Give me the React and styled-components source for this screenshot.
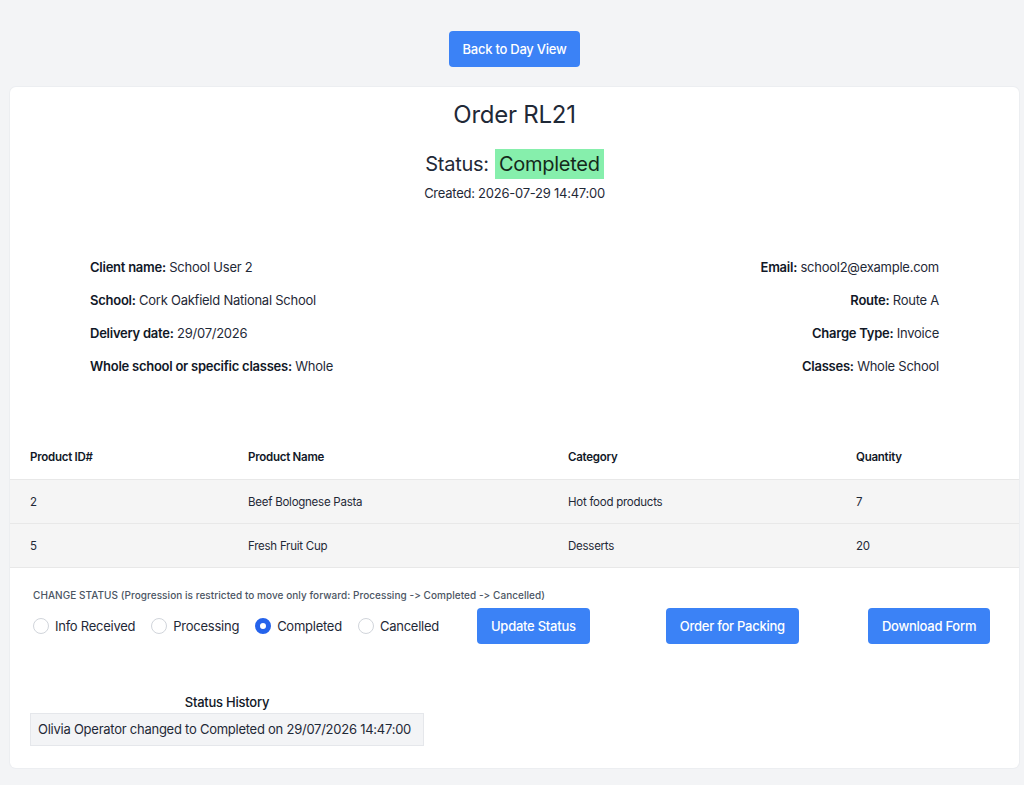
import React, { useState } from "react";
import styled, { createGlobalStyle } from "styled-components";

const GlobalStyle = createGlobalStyle`
  body {
    margin: 0;
    background: #f3f4f6;
    font-family: Inter, "Noto Sans", "Liberation Sans", sans-serif;
    font-feature-settings: "calt" 0;
    letter-spacing: -0.25px;
    color: #1f2937;
  }
`;

const Page = styled.div`
  padding: 31px 5px 18px 10px;
  display: flex;
  flex-direction: column;
  align-items: center;
`;

const Button = styled.button`
  height: 36px;
  padding: 0 14px;
  border: none;
  border-radius: 4px;
  background: #3b82f6;
  color: #fff;
  font-family: inherit;
  letter-spacing: inherit;
  font-size: 13px;
  font-weight: 500;
  white-space: nowrap;
  cursor: pointer;
  margin-left: ${props => props.offset || 0}px;
  flex-shrink: 0;
`;

const Card = styled.div`
  width: 100%;
  margin-top: 20px;
  background: #fff;
  border-radius: 6px;
  box-shadow: 0 0 0 1px #eceef1;
  padding: 12px 0 22px;
  box-sizing: border-box;
`;

const Header = styled.header`
  display: flex;
  flex-direction: column;
  align-items: center;
`;

const Title = styled.h1`
  margin: 0;
  font-size: 24px;
  line-height: 32px;
  font-weight: 400;
  color: #1f2937;
`;

const StatusLine = styled.div`
  margin-top: 18px;
  display: flex;
  align-items: center;
  gap: 6px;
  font-size: 20px;
  line-height: 30px;
`;

const Badge = styled.span`
  background: #86efac;
  padding: 0 4px;
  color: #14291b;
`;

const Created = styled.div`
  margin-top: 5px;
  font-size: 13px;
  line-height: 18px;
`;

const Info = styled.div`
  margin-top: 55px;
  padding: 0 80px;
  display: flex;
  justify-content: space-between;
`;

const InfoColumn = styled.div`
  display: flex;
  flex-direction: column;
  gap: 13px;
  text-align: ${props => props.align};
`;

const Field = styled.div`
  font-size: 13px;
  line-height: 20px;
  color: #1f2937;

  b {
    font-weight: 600;
    color: #111827;
  }
`;

const Table = styled.table`
  margin-top: 59px;
  width: 100%;
  table-layout: fixed;
  border-collapse: collapse;
  font-size: 11.5px;
`;

const Th = styled.th`
  height: 44px;
  padding: 0 20px;
  text-align: left;
  font-weight: 600;
  color: #111827;
  width: ${props => (props.w ? `${props.w}px` : "auto")};
`;

const Row = styled.tr`
  background: #f5f5f5;
  border-top: 1px solid #e8e8e8;
  &:last-child {
    border-bottom: 1px solid #e8e8e8;
  }
`;

const Td = styled.td`
  height: 43px;
  padding: 0 20px;
  color: #1f2937;
`;

const StatusSection = styled.div`
  padding: 20px 30px 0 23px;
`;

const Hint = styled.div`
  font-size: 10px;
  line-height: 14px;
  color: #4b5563;
  font-weight: 500;
  letter-spacing: 0.05px;
`;

const Controls = styled.div`
  margin-top: 6px;
  display: flex;
  align-items: center;
`;

const RadioGroup = styled.div`
  display: flex;
  align-items: center;
  gap: 16px;
  flex-shrink: 0;
`;

const RadioLabel = styled.label`
  display: flex;
  align-items: center;
  gap: 6px;
  font-size: 13px;
  white-space: nowrap;
  color: #1f2937;
  cursor: pointer;
`;

const RadioDot = styled.span`
  width: 16px;
  height: 16px;
  border-radius: 50%;
  box-sizing: border-box;
  border: ${props => (props.checked ? "5px solid #2563eb" : "1px solid #d1d5db")};
  background: #fff;
`;

const History = styled.div`
  margin: 49px 0 0 20px;
  width: 394px;
  display: flex;
  flex-direction: column;
  align-items: center;
`;

const HistoryTitle = styled.div`
  font-size: 13px;
  line-height: 18px;
  font-weight: 500;
  color: #111827;
`;

const HistoryItem = styled.div`
  margin-top: 2px;
  width: 100%;
  box-sizing: border-box;
  padding: 6px 7px;
  background: #f3f4f6;
  border: 1px solid #e5e7eb;
  font-size: 13px;
  line-height: 19px;
  white-space: nowrap;
  color: #1f2937;
`;

const statuses = ["Info Received", "Processing", "Completed", "Cancelled"];

const products = [
  { id: 2, name: "Beef Bolognese Pasta", category: "Hot food products", qty: 7 },
  { id: 5, name: "Fresh Fruit Cup", category: "Desserts", qty: 20 }
];

const App = () => {
  const [status, setStatus] = useState("Completed");

  return (
    <>
      <GlobalStyle />
      <Page>
        <Button>Back to Day View</Button>
        <Card>
          <Header>
            <Title>Order RL21</Title>
            <StatusLine>
              Status: <Badge>Completed</Badge>
            </StatusLine>
            <Created>Created: 2026-07-29 14:47:00</Created>
          </Header>

          <Info>
            <InfoColumn align="left">
              <Field><b>Client name:</b> School User 2</Field>
              <Field><b>School:</b> Cork Oakfield National School</Field>
              <Field><b>Delivery date:</b> 29/07/2026</Field>
              <Field><b>Whole school or specific classes:</b> Whole</Field>
            </InfoColumn>
            <InfoColumn align="right">
              <Field><b>Email:</b> school2@example.com</Field>
              <Field><b>Route:</b> Route A</Field>
              <Field><b>Charge Type:</b> Invoice</Field>
              <Field><b>Classes:</b> Whole School</Field>
            </InfoColumn>
          </Info>

          <Table>
            <thead>
              <tr>
                <Th w={178}>Product ID#</Th>
                <Th w={280}>Product Name</Th>
                <Th w={248}>Category</Th>
                <Th>Quantity</Th>
              </tr>
            </thead>
            <tbody>
              {products.map(p => (
                <Row key={p.id}>
                  <Td>{p.id}</Td>
                  <Td>{p.name}</Td>
                  <Td>{p.category}</Td>
                  <Td>{p.qty}</Td>
                </Row>
              ))}
            </tbody>
          </Table>

          <StatusSection>
            <Hint>
              CHANGE STATUS (Progression is restricted to move only forward: Processing -&gt; Completed -&gt; Cancelled)
            </Hint>
            <Controls>
              <RadioGroup>
                {statuses.map(s => (
                  <RadioLabel key={s} onClick={() => setStatus(s)}>
                    <RadioDot checked={status === s} />
                    {s}
                  </RadioLabel>
                ))}
              </RadioGroup>
              <Button offset={38}>Update Status</Button>
              <Button offset={76}>Order for Packing</Button>
              <Button offset={69}>Download Form</Button>
            </Controls>
          </StatusSection>

          <History>
            <HistoryTitle>Status History</HistoryTitle>
            <HistoryItem>Olivia Operator changed to Completed on 29/07/2026 14:47:00</HistoryItem>
          </History>
        </Card>
      </Page>
    </>
  );
};

export default App;
